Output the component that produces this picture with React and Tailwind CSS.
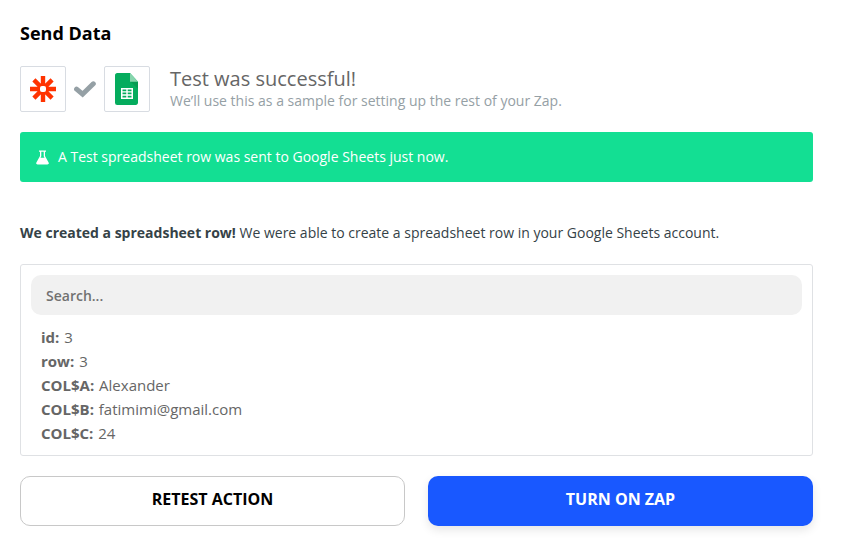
import React from 'react';

const fields = [
	{ name: 'id', value: '3' },
	{ name: 'row', value: '3' },
	{ name: 'COL$A', value: 'Alexander' },
	{ name: 'COL$B', value: 'fatimimi@gmail.com' },
	{ name: 'COL$C', value: '24' },
];

function ZapierIcon() {
	return (
		<svg className="size-[26px]" viewBox="0 0 26 26">
			<path stroke="#ff3300" strokeWidth="4.4" d="M13 0v26M0 13h26M3.9 3.9l18.2 18.2M22.1 3.9L3.9 22.1" />
			<rect x="10" y="10" width="6" height="6" rx="2" fill="#fff" />
		</svg>
	);
}

function CheckIcon() {
	return (
		<svg className="h-[18px] w-[22px]" viewBox="0 0 22 18" fill="none" stroke="#95a0a5" strokeWidth="5" strokeLinecap="round">
			<path d="M2.6 9.2l6 5L19.3 3.8" />
		</svg>
	);
}

function SheetsIcon() {
	return (
		<svg className="mr-px h-8 w-[23px]" viewBox="0 0 23 32">
			<path fill="#05ac5d" d="M2.2 0H15l8 8.7v21.1c0 1.2-1 2.2-2.2 2.2H2.2A2.2 2.2 0 0 1 0 29.8V2.2C0 1 1 0 2.2 0z" />
			<path fill="#059b52" d="M15.6 8.7H23v7z" />
			<path fill="#87d5ad" d="M15 0l8 8.7h-8z" />
			<path fill="#fff" fillRule="evenodd" d="M6 15h12v11H6zM7.5 16.5v1.7h3.8v-1.7zM12.7 16.5v1.7h3.8v-1.7zM7.5 19.6v1.7h3.8v-1.7zM12.7 19.6v1.7h3.8v-1.7zM7.5 22.7v1.8h3.8v-1.8zM12.7 22.7v1.8h3.8v-1.8z" />
		</svg>
	);
}

function FlaskIcon() {
	return (
		<svg className="h-[15px] w-[14px]" viewBox="0 0 14 15">
			<path fill="#fff" fillRule="evenodd" d="M4 .5h7v1.2h-1v4.2l3.6 6.5c.6 1.2 0 2-1.2 2H2.6c-1.2 0-1.8-.8-1.2-2L5 5.900V1.700H4zM6.300 1.700V6.200L5.500 7.700h4L8.700 6.200V1.700z" />
		</svg>
	);
}

function AppTile({ children }) {
	return (
		<div className="flex size-[46px] items-center justify-center rounded-xs border border-[#d8dce2]">
			{children}
		</div>
	);
}

export default function App() {
	return (
		<main className="h-[550px] overflow-hidden bg-white pt-[21px] pr-[30px] pl-5 font-['Open_Sans',sans-serif] whitespace-nowrap">
			<h1 className="text-[18px] leading-6 font-bold text-black">Send Data</h1>

			<header className="mt-[21px] flex h-[46px] items-center">
				<AppTile>
					<ZapierIcon />
				</AppTile>
				<div className="flex w-[38px] justify-center">
					<CheckIcon />
				</div>
				<AppTile>
					<SheetsIcon />
				</AppTile>
				<div className="ml-5">
					<h2 className="text-[20px] leading-6 text-[#666]">Test was successful!</h2>
					<p className="text-[14px] leading-5 text-[#95a0a5]">We’ll use this as a sample for setting up the rest of your Zap.</p>
				</div>
			</header>

			<div className="mt-5 flex h-[50px] items-center gap-[9px] rounded-[3px] bg-[#13df93] pl-[15px] text-[14px] text-white">
				<FlaskIcon />
				<span className="pb-0.5">A Test spreadsheet row was sent to Google Sheets just now.</span>
			</div>

			<p className="mt-[41px] text-[14px] leading-5 text-[#354247]">
				<strong className="font-bold">We created a spreadsheet row!</strong> We were able to create a spreadsheet row in your Google Sheets account.
			</p>

			<section className="mt-[21px] h-48 rounded-[3px] border border-[#dfe1e4] p-2.5">
				<input
					type="text"
					placeholder="Search..."
					className="block h-10 w-full rounded-[10px] bg-[#f1f1f1] px-[15px] text-[14px] font-semibold outline-none placeholder:text-[#717171]"
				/>
				<ul className="mt-2.5 pl-2.5 text-[15px] leading-6 text-[#666]">
					{fields.map((field) => (
						<li key={field.name}>
							<strong className="mr-px font-bold">{field.name}:</strong> {field.value}
						</li>
					))}
				</ul>
			</section>

			<footer className="mt-5 grid grid-cols-2 gap-[23px] text-[16px] font-bold">
				<button type="button" className="h-[50px] rounded-[10px] border border-[#c8c8c8] pb-1 text-black">
					RETEST ACTION
				</button>
				<button type="button" className="h-[50px] rounded-[10px] bg-[#1958ff] pb-1 text-white shadow-[0_4px_10px_rgba(0,0,0,0.1)]">
					TURN ON ZAP
				</button>
			</footer>
		</main>
	);
}
